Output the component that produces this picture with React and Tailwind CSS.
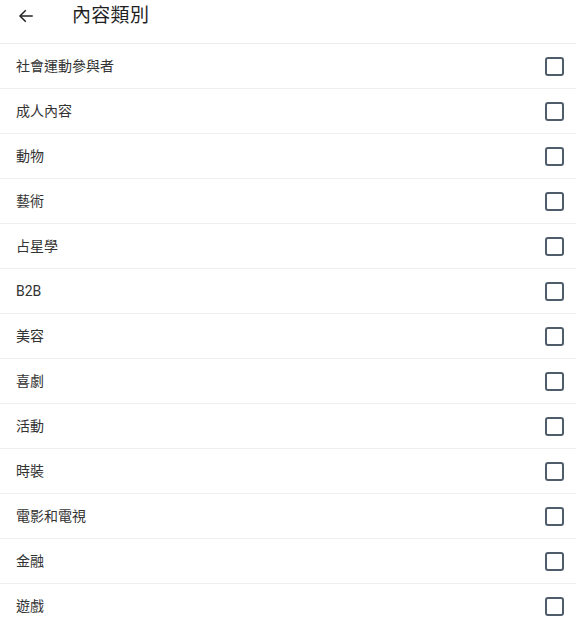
import React, { useState } from "react";

const categories = [
  "社會運動參與者",
  "成人內容",
  "動物",
  "藝術",
  "占星學",
  "B2B",
  "美容",
  "喜劇",
  "活動",
  "時裝",
  "電影和電視",
  "金融",
  "遊戲",
];

const font = { fontFamily: 'Roboto, "Noto Sans CJK TC", sans-serif' };

const App = () => {
  const [checked, setChecked] = useState({});

  return (
    <div className="w-[576px] bg-white" style={font}>
      {/* header is scrolled up a bit, so content sits high */}
      <div className="h-[44px] flex items-start pt-[2px] border-b border-[#ececec]">
        <button className="w-[50px] h-[28px] flex items-center justify-center pl-[1px]">
          <svg width="18" height="18" viewBox="0 0 24 24" fill="none" stroke="#222" strokeWidth="2" strokeLinecap="square">
            <path d="M20 12H5" />
            <path d="M11 5l-7 7 7 7" />
          </svg>
        </button>
        <h1 className="ml-[22px] h-[28px] leading-[28px] text-[19px] text-[#1f1f1f] font-normal tracking-[0.3px]">內容類別</h1>
      </div>
      {categories.map((name, index) => (
        <label
          key={name}
          className="h-[45px] flex items-center justify-between pl-4 pr-[12px] border-b border-[#efefef] cursor-pointer"
        >
          <span className="text-[14px] text-[#333]">{name}</span>
          <span
            onClick={() => setChecked({ ...checked, [index]: !checked[index] })}
            className="w-[19px] h-[19px] rounded-[3px] border-2 border-[#4f5d6b]"
          />
        </label>
      ))}
    </div>
  );
};

export default App;
